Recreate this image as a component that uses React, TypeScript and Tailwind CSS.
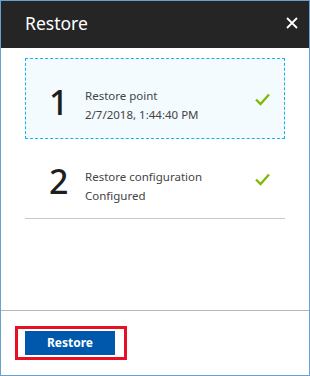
import React from "react";

const Check = () => (
  <svg width="15" height="13" viewBox="0 0 15 13" className="block">
    <polyline points="1,6.5 5.5,11 14,1.5" fill="none" stroke="#7fba00" strokeWidth="2.3" />
  </svg>
);

export default function App() {
  const font = { fontFamily: '"Noto Sans", "Open Sans", sans-serif' };
  return (
    <div
      className="w-[310px] h-[376px] border border-[#6a9fd4] flex flex-col bg-white overflow-hidden"
      style={font}
    >
      <div className="h-[47px] shrink-0 bg-[#252525] flex items-center pl-6 pr-[6px] justify-between">
        <span className="text-white text-[17.5px] leading-none -mt-[2px]">Restore</span>
        <svg width="12" height="12" viewBox="0 0 12 12" className="mr-[5px] -mt-[4px]">
          <path d="M1 1 L11 11 M11 1 L1 11" stroke="#ffffff" strokeWidth="1.8" />
        </svg>
      </div>
      <div className="flex-1 flex flex-col px-6 pt-[10px]">
        <div className="h-[81px] border border-dashed border-[#1ab1ea] bg-[#f3fbff] flex items-start pl-[23px] pr-[14px]">
          <span className="w-[36px] pt-[26px] text-[34px] leading-[35px] font-medium text-[#1e1e1e]">1</span>
          <div className="flex-1 flex flex-col pt-[27px] text-[11.5px] leading-[19px] text-[#444444]">
            <span>Restore point</span>
            <span>2/7/2018, 1:44:40 PM</span>
          </div>
          <div className="pt-[34px]">
            <Check />
          </div>
        </div>
        <div className="h-[80px] border-b border-[#c8c8c8] flex items-start pl-[24px] pr-[15px]">
          <span className="w-[36px] pt-[25px] text-[34px] leading-[35px] font-medium text-[#1e1e1e]">2</span>
          <div className="flex-1 flex flex-col pt-[28px] text-[11.5px] leading-[19px] text-[#444444]">
            <span>Restore configuration</span>
            <span>Configured</span>
          </div>
          <div className="pt-[34px]">
            <Check />
          </div>
        </div>
      </div>
      <div className="h-[65px] shrink-0 border-t border-[#b8b8b8] pl-[14px] pt-[15px]">
        <div className="w-[112px] h-[34px] border-[3px] border-[#e81123] pl-[7px] pt-[2px]">
          <button className="w-[90px] h-[24px] bg-[#0058ad] text-white text-[12px] font-bold leading-none flex items-center justify-center">
            Restore
          </button>
        </div>
      </div>
    </div>
  );
}
